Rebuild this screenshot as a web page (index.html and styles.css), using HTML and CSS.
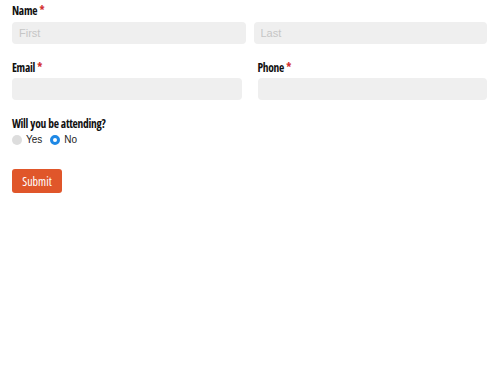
FILE: index.html
```html
<!DOCTYPE html>
<html lang="en">
<head>
  <meta charset="UTF-8" />
  <title>RSVP Form</title>
  <link rel="stylesheet" href="styles.css">
</head>
<body>

<form class="rsvp">
  <div class="field">
    <label class="label">Name <span class="req">*</span></label>
    <div class="pair pair-name">
      <input type="text" placeholder="First" />
      <input type="text" placeholder="Last" />
    </div>
  </div>

  <div class="pair pair-contact">
    <div class="field">
      <label class="label">Email <span class="req">*</span></label>
      <input type="email" />
    </div>
    <div class="field">
      <label class="label">Phone <span class="req">*</span></label>
      <input type="tel" />
    </div>
  </div>

  <div class="field">
    <label class="label">Will you be attending?</label>
    <div class="choices">
      <label class="choice"><span class="dot"></span>Yes</label>
      <label class="choice"><span class="dot checked"></span>No</label>
    </div>
  </div>

  <button type="button" class="submit">Submit</button>
</form>

</body>
</html>
```

FILE: styles.css
```css
body {
  margin: 0;
  background: #fff;
  font-family: 'Liberation Sans', Arial, sans-serif;
}
.rsvp {
  padding: 3px 13px 0 12px;
}
.field {
  margin-bottom: 16px;
}
.label {
  display: block;
  font-family: 'Open Sans', sans-serif;
  font-stretch: 75%;
  font-weight: 700;
  font-size: 11.5px;
  line-height: 16px;
  color: #111;
  margin-bottom: 3px;
  letter-spacing: -0.3px;
  word-spacing: 0.5px;
}
.req {
  color: #d32f2f;
}
.pair {
  display: grid;
  grid-template-columns: 1fr 1fr;
}
.pair-name {
  gap: 8px;
}
.pair-contact {
  gap: 16px;
}
.pair-contact .field {
  margin-bottom: 16px;
}
.pair-contact .label {
  margin-bottom: 2px;
}
input {
  display: block;
  width: 100%;
  box-sizing: border-box;
  height: 22px;
  border: none;
  border-radius: 4px;
  background: #efefef;
  padding: 0 7px;
  font-family: 'Liberation Sans', Arial, sans-serif;
  font-size: 11px;
  color: #333;
}
input::placeholder {
  color: #c6c6c6;
}
.choices {
  display: flex;
  gap: 8px;
  font-size: 10px;
  color: #222;
  margin-top: -1px;
}
.choice {
  display: flex;
  align-items: center;
  gap: 4px;
}
.dot {
  width: 10px;
  height: 10px;
  border-radius: 50%;
  background: #ddd;
  box-sizing: border-box;
}
.dot.checked {
  background: #fff;
  border: 3px solid #1e88e5;
}
.submit {
  margin-top: 8px;
  background: #e0562a;
  color: #fff;
  border: none;
  border-radius: 3px;
  width: 50px;
  height: 24px;
  font-family: 'Open Sans', sans-serif;
  font-stretch: 75%;
  font-size: 12px;
  cursor: pointer;
}
```
